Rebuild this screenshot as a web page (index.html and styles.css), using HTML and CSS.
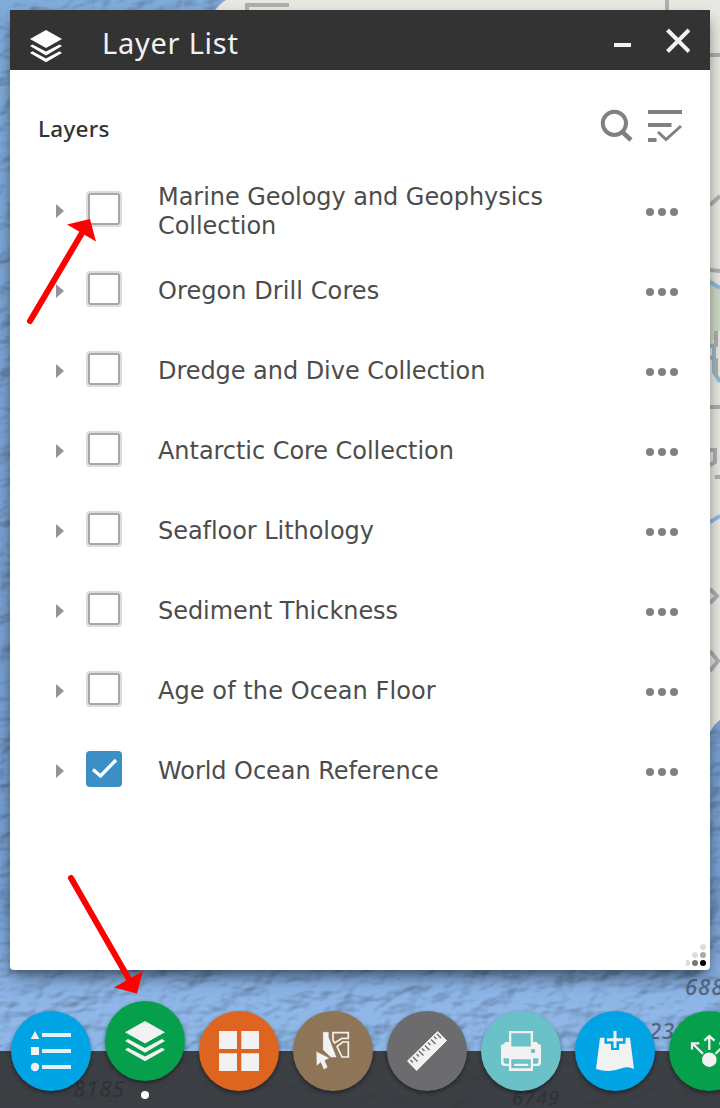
FILE: index.html
```html
<!DOCTYPE html>
<html lang="en">
<head>
<meta charset="utf-8">
<title>Layer List</title>
<link rel="stylesheet" href="styles.css">
</head>
<body>
<main class="app">
  <svg class="map" width="720" height="1108" viewBox="0 0 720 1108" aria-hidden="true">
    <defs>
      <filter id="relief" x="0" y="0" width="100%" height="100%" color-interpolation-filters="sRGB">
        <feTurbulence type="fractalNoise" baseFrequency="0.03 0.05" numOctaves="3" seed="8" result="n"/>
        <feDiffuseLighting in="n" surfaceScale="2.6" diffuseConstant="1.13" lighting-color="#fff" result="l"><feDistantLight azimuth="225" elevation="60"/></feDiffuseLighting>
        <feBlend in="SourceGraphic" in2="l" mode="multiply"/>
      </filter>
      <linearGradient id="sea" x2="0" y2="1">
        <stop offset="0" stop-color="#80abda"/><stop offset=".4" stop-color="#7ba3d3"/><stop offset=".82" stop-color="#769fd0"/><stop offset=".91" stop-color="#8fb7e8"/><stop offset="1" stop-color="#8db7e8"/>
      </linearGradient>
    </defs>
    <g filter="url(#relief)"><rect width="720" height="1108" fill="url(#sea)"/></g>
    <path d="M214 12Q219 4 226 0H720V720Q714 724 710 732V12Z" fill="#e8e7e2"/>
    <path d="M710 278L720 286V330L710 345Z" fill="#ccd8c4"/>
    <path d="M710 282L720 288M714 345V372L720 382M710 522L720 516" fill="none" stroke="#8fb9df" stroke-width="4"/>
    <path d="M247 12V5H289M667 0V12M710 55H720M710 205L720 196M710 270L720 271M716 331V345L710 346M710 357L716 360V376M710 407H720M710 450H715V462L710 465M715 477H720M710 589L717 596L710 603M710 651L718 661L710 671" fill="none" stroke="#adaeae" stroke-width="4"/>
    <g class="depths"><text x="685" y="995">688</text><text x="649" y="1039">235</text></g>
  </svg>

  <section class="panel">
    <header class="titlebar">
      <svg class="title-icon" width="32" height="32" viewBox="20 20 40 40"><use href="#layers"/></svg>
      <h1>Layer List</h1>
      <svg class="window-controls" width="80" height="30" viewBox="0 0 80 30"><path d="M4 20H21" stroke-width="4"/><path d="M57.500 5L79 26.500M79 5L57.500 26.500" stroke-width="4"/></svg>
    </header>
    <div class="tools">
      <h2>Layers</h2>
      <svg width="84" height="36" viewBox="0 0 84 36"><circle cx="16.400" cy="15.300" r="11.600" stroke-width="4"/><path d="M25 24.500L33 32" stroke-width="4.500"/><path d="M50 4H84M50 17H73.500M50 32H58.500" stroke-width="4"/><path d="M60 24L68 31.500L83 18" stroke-width="3"/></svg>
    </div>
    <ul class="layers">
      <li class="two-line"><i class="expand"></i><span class="check"></span><span class="name">Marine Geology and Geophysics Collection</span><b class="more"><i></i><i></i><i></i></b></li>
      <li><i class="expand"></i><span class="check"></span><span class="name wide">Oregon Drill Cores</span><b class="more"><i></i><i></i><i></i></b></li>
      <li><i class="expand"></i><span class="check"></span><span class="name">Dredge and Dive Collection</span><b class="more"><i></i><i></i><i></i></b></li>
      <li><i class="expand"></i><span class="check"></span><span class="name">Antarctic Core Collection</span><b class="more"><i></i><i></i><i></i></b></li>
      <li><i class="expand"></i><span class="check"></span><span class="name">Seafloor Lithology</span><b class="more"><i></i><i></i><i></i></b></li>
      <li><i class="expand"></i><span class="check"></span><span class="name">Sediment Thickness</span><b class="more"><i></i><i></i><i></i></b></li>
      <li><i class="expand"></i><span class="check"></span><span class="name wide">Age of the Ocean Floor</span><b class="more"><i></i><i></i><i></i></b></li>
      <li><i class="expand"></i><span class="check on"><svg width="36" height="36" viewBox="0 0 36 36"><path d="M7 18.500L14.500 25L30 9" fill="none" stroke="#fff" stroke-width="3.400"/></svg></span><span class="name">World Ocean Reference</span><b class="more"><i></i><i></i><i></i></b></li>
    </ul>
    <svg class="grip" width="24" height="24" viewBox="0 0 24 24"><g fill="#ddd"><circle cx="17" cy="4" r="3"/><circle cx="1" cy="20" r="3"/><circle cx="9" cy="12" r="3"/></g><circle cx="17" cy="12" r="3" fill="#aaa"/><circle cx="9" cy="20" r="3" fill="#777"/><circle cx="17" cy="20" r="3"/></svg>
  </section>

  <nav class="dock">
    <svg class="tool blue" viewBox="0 0 80 80"><path d="M24 20L28.300 28H19.700ZM20 36H28V44H20Z"/><circle cx="24" cy="56" r="4.200"/><path d="M31 24H60M31 40H60M31 56H60" stroke="#e2f2fb" stroke-width="4"/></svg>
    <svg class="tool green active" viewBox="0 0 80 80"><g id="layers"><path d="M40 20L60 31.300L40 42.500L20 31.300Z"/><path d="M20 40L23 38L40 47L57 38L60 40L40 51.800ZM20 48.700L23 46.700L40 55.500L57 46.700L60 48.700L40 60.300Z"/></g></svg>
    <svg class="tool orange" viewBox="0 0 80 80"><path d="M20 20H38V38H20ZM42.300 20H60V38H42.300ZM20 42.300H38V60H20ZM42.300 42.300H60V60H42.300Z"/></svg>
    <svg class="tool brown" viewBox="0 0 80 80"><path d="M29.700 20.700H36V26L44 46.700H38L29.700 39ZM23 40L37 47L32 49.700L35 56.300L30.700 59L27.700 51.700L23.300 55.500Z" stroke="#8f7557" stroke-width=".8"/><path d="M40 21.700H55.300V27.300H49L41.500 32L40 29ZM55.300 31V46H49L44 35.500L49.700 31Z" fill="none" stroke="#f2f2f2" stroke-width="1.700"/></svg>
    <svg class="tool gray" viewBox="0 0 80 80"><path d="M50.700 20.500L59.500 29.500L29.700 59.500L20.500 50Z" stroke="#f2f2f2" stroke-width="1" stroke-linejoin="round"/><path d="M23.500 49L26 51.500M26 46L30.500 50.500M29.500 43L32 45.500M32 40L36.500 44.500M35 37.500L37.500 40M38 34.500L42.500 39M41 31.500L43.500 34M44 28.500L48.500 33M47 25.500L49.500 28M50 23L54 27" stroke="#6c6c6e" stroke-width="1.400"/></svg>
    <svg class="tool teal" viewBox="0 0 80 80"><path d="M28 20H52V31H56Q56 33 60 34V53L58 55H52V60H28V55H22L20 53V34Q24 33 24 31H28Z"/><path class="cut" d="M30.300 22.300H49.700V35.500H30.300ZM22.500 47.300H28V52.800H24L22.500 51.500ZM52 47.300H57.500V51.500L56 52.800H52ZM30.300 48.300H49.700V57.300H30.300Z"/><circle class="cut" cx="52" cy="40" r="2.200"/><path d="M33 52.700H47.300V55H33Z"/></svg>
    <svg class="tool blue" viewBox="0 0 80 80"><path d="M25 26.700H55L59 58Q53 55 46 57.500Q34 62 21 58Z"/><path d="M40 25V39M29.500 28.700H50.500" stroke="#00a4e4" stroke-width="8"/><path d="M40 20V37M32 28.700H48" stroke="#f2f2f2" stroke-width="3"/></svg>
    <svg class="tool green" viewBox="0 0 80 80"><circle cx="40.300" cy="48.700" r="7.300"/><path d="M40.300 39V26M35.300 29.700L40.300 25L45.500 29.700M34 42.700L23.500 32.500M23 38.500V32.300H30.300M46.500 42.700L57 32.500M57.500 38.500V32.300H50.300" fill="none" stroke="#f2f2f2" stroke-width="2.300"/></svg>
    <span class="indicator"></span>
    <span class="dock-depth left">8185</span><span class="dock-depth right">6749</span>
  </nav>

  <svg class="arrows" width="720" height="1108" viewBox="0 0 720 1108" fill="red" stroke="red" stroke-linecap="round" aria-hidden="true">
    <path d="M30 321L82 233M71 878L130 981" stroke-width="6"/><path d="M67 224.500L90 219L96 241.500ZM114 987.500L143 971L137 993.500Z" stroke="none"/>
  </svg>
</main>
</body>
</html>
```
FILE: styles.css
```css
* { box-sizing: border-box; }
body { margin: 0; }
.app { position: relative; width: 720px; height: 1108px; overflow: hidden; padding: 10px; display: flex; flex-direction: column; background: #84ace0; font-family: "DejaVu Sans", Verdana, sans-serif; }
.map, .arrows { position: absolute; left: 0; top: 0; pointer-events: none; }
.depths, .dock-depth { font: italic 500 22px "Noto Sans", sans-serif; letter-spacing: 1px; fill: #536681; }
.panel { position: relative; height: 960px; flex: none; background: #fff; border-radius: 0 0 4px 4px; box-shadow: 0 8px 16px -3px rgba(0,0,0,.6); }
.titlebar { height: 60px; background: #333; display: flex; align-items: center; padding: 4px 20px 0 20px; color: #f2f2f2; }
.title-icon { fill: #fff; margin-top: 7px; }
.titlebar h1 { flex: 1; margin: 1px 0 0 40px; font: 29px "Noto Sans", sans-serif; letter-spacing: .75px; }
.window-controls { stroke: #f2f2f2; margin-top: -5px; }
.tools { height: 101px; padding: 38px 28px 0 28px; display: flex; justify-content: space-between; align-items: flex-start; }
.tools h2 { margin: 5px 0 0; color: #333; font: 500 22.5px/32px "Noto Sans", sans-serif; letter-spacing: .25px; }
.tools svg { fill: none; stroke: #808080; }
.layers { list-style: none; margin: 0; padding: 0; }
.layers li { height: 80px; padding: 0 32px 0 46px; display: flex; align-items: center; }
.expand { width: 8px; height: 14px; background: #949494; clip-path: polygon(0 0, 100% 50%, 0 100%); }
.check { width: 36px; height: 36px; margin: -4px 36px 0 22px; border: 2px solid #dcdcdc; border-radius: 4px; background: #fff; box-shadow: inset 0 0 0 2px #a6a6a6; }
.check.on { background: #3b8fc6; border: 0; box-shadow: none; }
.name { flex: 1; max-width: 430px; color: #4c4c4c; font-size: 24px; line-height: 29px; letter-spacing: -.05px; font-variant-ligatures: none; }
.name.wide { letter-spacing: .08px; }
.two-line .name { margin-top: 2px; }
.more { margin-left: auto; margin-top: 2px; display: flex; gap: 4px; }
.more i { width: 8px; height: 8px; border-radius: 50%; background: #808080; }
.grip { position: absolute; right: 0; bottom: 3px; }
.dock { position: relative; margin: 81px -10px -10px; height: 57px; flex: none; padding-left: 11px; display: flex; gap: 14px; background: rgba(51,51,51,.9); }
.tool { width: 80px; height: 80px; flex: none; margin-top: -40px; border-radius: 50%; fill: #f2f2f2; filter: drop-shadow(0 2px 2px rgba(0,0,0,.45)); z-index: 1; }
.tool.active { margin-top: -50px; }
.blue { background: #00a4e4; }
.green { background: #069f4b; }
.orange { background: #de651f; }
.brown { background: #8f7557; }
.gray { background: #6c6c6e; }
.teal { background: #6ac1c8; }
.cut { fill: #6ac1c8; }
.indicator { position: absolute; z-index: 2; left: 141px; top: 40px; width: 8px; height: 8px; border-radius: 50%; background: #fff; }
.dock-depth { position: absolute; top: 21px; color: #2f3338; font-size: 22px; line-height: 32px; }
.left { left: 73px; }
.right { left: 512px; top: 36px; font-size: 20px; line-height: 22px; }
```
